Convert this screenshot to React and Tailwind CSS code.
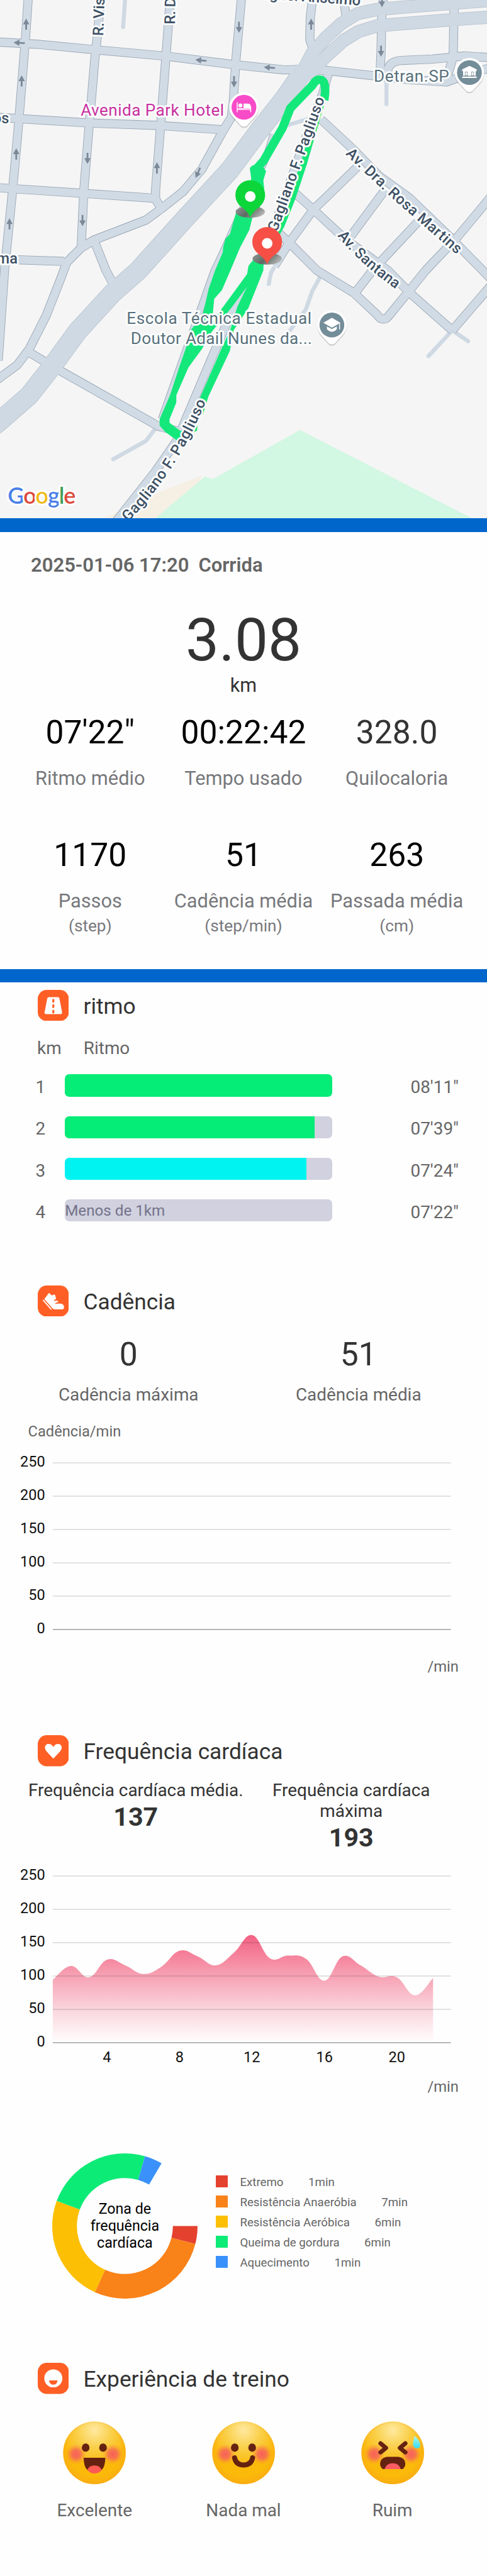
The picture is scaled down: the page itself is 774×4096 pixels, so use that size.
import React from "react";

const FREEWAYS = [
  { d: "M-20 950L0 934L65 877L114 815L172 735L250 650L307 600L413 482L510 377L577 287L634 214L675 155", w: 42 },
  { d: "M670 160L692 118L723 83L757 52L793 30L837 21L893 16L1100 0", w: 27 },
  { d: "M682 172L718 130L762 90L795 70L837 57L998 44L1100 37", w: 27 },
];

const STREETS = [
  "M63 -10L57 77L48 191L39 300L28 421L10 600L-4 800",
  "M224 -10L215 88L210 134L197 287L186 421L180 550",
  "M378 -10L368 126L357 268L345 421L345 442L358 463",
  "M536 -10L523 134L517 230L513 260L492 295L448 375L406 425L358 463L324 488L207 533L179 551L148 582L134 620L103 699L65 774L38 810L-10 845",
  "M694 -10L688 40L687 88L698 120",
  "M755 -20L764 12L768 40",
  "M851 -10L847 20L845 115L843 165",
  "M1007 19L1005 126L992 170",
  "M859 160C862 140 874 135 892 134L960 131L1030 124L1090 128",
  "M1090 150L1050 160L990 182L900 176L730 157L690 154",
  "M-10 93L80 98L207 110L372 125L523 144L630 155L690 154",
  "M-10 260L200 273L345 278L496 288",
  "M-10 416L200 430L345 440",
  "M30 576L142 580",
  "M210 537L235 600L252 632",
  "M712 265L785 333L840 390L909 440L1000 528L1090 620",
  "M792 371L695 465L640 540L609 590",
  "M854 421L778 524",
  "M926 493L826 600L789 648",
  "M1090 435L1016 524L944 600L906 647L862 701C854 711 844 710 836 698L785 650L703 600L640 537L605 505",
  "M645 420L695 465L765 530L860 600L909 650L1003 733",
  "M1090 632L1003 733",
  "M65 782L124 817L352 946L400 958",
  "M730 155L716 207L689 275L606 509L590 560L523 671L468 798L413 928L393 976L344 1047L255 1160",
];

const SIDE_STREETS = [
  "M606 298L590 350L485 580L475 600L358 930",
];

const LANES = [
  "M278 -10L273 60",
  "M857 180L857 231",
  "M640 277L686 263",
  "M607 595L601 605L596 630",
  "M709 616L692 647L678 687L644 732",
  "M1003 733L950 790",
  "M1003 733L1038 757",
  "M348 946L324 978L251 1019",
];

const ARROWS = [
  [58, 54, 0], [48, 180, 0], [36, 342, 0], [21, 497, 0], [348, 373, 0], [690, 54, 0],
  [530, 60, 180], [519, 181, 180], [194, 351, 180], [183, 489, 180], [845, 113, 180], [847, 3, 180],
  [43, 95, -86], [446, 134, -84], [598, 150, -86], [439, 383, 204],
];

function Teardrop({ x, y, fill, children }) {
  return (
    <g transform={`translate(${x} ${y})`}>
      <path d="M0 43C-4 43-7 41-10 37L-24 22A32.500 32.500 0 1 1 24 22L10 37C7 41 4 43 0 43Z" fill="#0000002a" transform="translate(0 3)" />
      <path d="M0 43C-4 43-7 41-10 37L-24 22A32.500 32.500 0 1 1 24 22L10 37C7 41 4 43 0 43Z" fill="#fff" />
      <circle r="27.500" fill={fill} />
      {children}
    </g>
  );
}

function RoutePin({ x, y, fill }) {
  return (
    <g transform={`translate(${x} ${y})`}>
      <ellipse cx="0" cy="33" rx="32.500" ry="13" fill="url(#pinShade)" />
      <path d="M0 45C-5 34-12 28-20 22A33 33 0 1 1 20 22C12 28 5 34 0 45Z" fill={fill} />
      <circle cy="-1" r="11.800" fill="#fff" />
    </g>
  );
}

function RouteMap() {
  const label = {
    fontFamily: "Roboto, sans-serif",
    paintOrder: "stroke",
    stroke: "#fbfdfd",
    strokeWidth: 8,
    strokeLinejoin: "round",
  };
  const road = { ...label, fontWeight: 500, fontSize: 33, fill: "#3e5064" };
  const poi = { ...label, fontWeight: 400, fontSize: 36.5, fill: "#59717b" };
  return (
    <svg viewBox="0 0 1080 1150" className="block h-[824.2px] w-full shrink-0" preserveAspectRatio="none">
      <defs>
        <linearGradient id="pinShade" x1="0" x2="1" y1="0.300" y2="0.700">
          <stop offset="0" stopColor="#8d9390" />
          <stop offset="0.450" stopColor="#5d6a62" />
          <stop offset="1" stopColor="#bdbdbd" />
        </linearGradient>
        <path id="gaglianoTop" d="M614 516L721 217" />
        <path id="gaglianoBottom" d="M284 1158Q394 1046 459 885" />
        <path id="rosa" d="M766 342Q848 424 1016 567" />
        <path id="santana" d="M748 523Q800 588 890 650" />
      </defs>
      <rect width="1080" height="1150" fill="#f5f5f5" />
      <path d="M448 1055L358 1090L230 1150H400Z" fill="#f5efe4" />
      <path d="M665 954L1047 1150H344L455 1057L472 1063Z" fill="#d2f7e2" />

      <g fill="none" strokeLinejoin="round">
        <g stroke="#cfd9e3" strokeLinecap="round" strokeWidth="9">
          {LANES.map((d) => <path key={d} d={d} />)}
        </g>
        <g stroke="#99a6b5">
          {STREETS.map((d) => <path key={d} d={d} strokeWidth="20" />)}
          {SIDE_STREETS.map((d) => <path key={d} d={d} strokeWidth="16" />)}
        </g>
        <g stroke="#b1bdc9">
          {FREEWAYS.map((r) => <path key={r.d} d={r.d} strokeWidth={r.w + 2} />)}
        </g>
        <g stroke="#d1dbe5">
          {STREETS.map((d) => <path key={d} d={d} strokeWidth="17.500" />)}
          {SIDE_STREETS.map((d) => <path key={d} d={d} strokeWidth="13.500" />)}
        </g>
        <g stroke="#cfd9e3">
          {FREEWAYS.map((r) => <path key={r.d} d={r.d} strokeWidth={r.w} />)}
        </g>
      </g>

      {ARROWS.map(([x, y, r]) => (
        <path key={`${x}-${y}`} transform={`translate(${x} ${y}) rotate(${r})`} d="M0-13L7 0H2V12H-2V0H-7Z" fill="#7c8998" />
      ))}

      <g fill="#14e87b">
        <path d="M719 222Q727 172 704 177Q697 181 692 190L644 240L627 283L585 356L572 371L570 406L566 470" fill="none" stroke="#14e87b" strokeWidth="19" strokeLinejoin="round" />
        <path d="M554 373Q561 362 580 366L590 380L584 400L586 420H556L557 395Z" />
        <path d="M714 225L689 310L674 362L648 440L624 500L590 560" fill="none" stroke="#14e87b" strokeWidth="14" strokeLinejoin="round" />
        <path d="M524 470L510 519L500 530L495 548L494 560L477 600L463 640L449 700L424 731L413 770L398 813L377 877L354 930V944L366 958L396 980L437 955L438 945L400 956L376 938V930L391 893V877L418 815L448 770L468 738L475 663L492 644L511 600L532 550L553 510L563 470Z" />
        <path d="M563 575L551 590L548 608L496 679L455 734L440 742L410 815H418L448 774L468 738L513 683L548 636L527 679L511 730L489 778L444 881L445 920L450 920L462 880L510 778L518 733L551 683L584 600L585 575Z" />
      </g>

      <text x="799" y="12" textAnchor="end" transform="rotate(4 799 12)" style={road}>Miguel Anselmo</text>
      <text transform="translate(229 80) rotate(-88)" style={road}>R. Visconde</text>
      <text transform="translate(388 54) rotate(-89)" style={road}>R. Dom</text>
      <text x="20" y="273" textAnchor="end" style={road}>os</text>
      <text x="39" y="585" textAnchor="end" style={road}>ma</text>
      <text style={road}><textPath href="#gaglianoTop" textLength="315">Gagliano F. Pagliuso</textPath></text>
      <text style={road}><textPath href="#gaglianoBottom" textLength="320">Gagliano F. Pagliuso</textPath></text>
      <text style={road}><textPath href="#rosa" textLength="333">Av. Dra. Rosa Martins</textPath></text>
      <text style={road}><textPath href="#santana" textLength="176">Av. Santana</textPath></text>

      <text x="179" y="257" textLength="318" style={{ ...poi, fill: "#c9319f" }}>Avenida Park Hotel</text>
      <text x="829" y="181" textLength="167" style={poi}>Detran.SP</text>
      <text x="281" y="718" textLength="410" style={poi}>Escola Técnica Estadual</text>
      <text x="290" y="763" textLength="402" style={poi}>Doutor Adail Nunes da...</text>

      <Teardrop x={541} y={238} fill="#f84bc8">
        <g fill="#fff">
          <path d="M-16-11H-14V4H14V-2H16V11H14V6H-14V11H-16Z" />
          <circle cx="-8" cy="-4" r="4.500" />
          <path d="M-1-8H9Q15-8 15-2V3H-1Z" />
          <path d="M-13 2H-1V4H-13Z" />
        </g>
      </Teardrop>
      <Teardrop x={1041} y={161} fill="#738d99">
        <g fill="#fff">
          <path d="M0-15L16-7V-3H-16V-7Z" />
          <path d="M-14-4H14V7H10V-2H4V7H-4V-2H-10V7H-14Z" />
          <path d="M-9-1H-5V6H-9ZM5-1H9V6H5ZM-16 9H16V12H-16Z" />
        </g>
      </Teardrop>
      <Teardrop x={736} y={721} fill="#738d99">
        <g fill="#fff">
          <path d="M0-16L19-5L0 6L-19-5Z" />
          <path d="M-11 3L0 9L11 3V9Q6 15 0 15Q-6 15-11 9Z" />
          <path d="M16-5H18V10H16Z" />
        </g>
      </Teardrop>
      <RoutePin x={555} y={437} fill="#0cd63a" />
      <RoutePin x={592.5} y={541} fill="#f74f46" />

      <text x="17" y="1117" textLength="151" style={{ ...label, fontFamily: "Lato, sans-serif", fontSize: 50, fontWeight: 600, stroke: "#ffffff" }}>
        <tspan fill="#4a80e8">G</tspan>
        <tspan fill="#dc4a3d">o</tspan>
        <tspan fill="#efbc1b">o</tspan>
        <tspan fill="#4a80e8">g</tspan>
        <tspan fill="#3d9e57">l</tspan>
        <tspan fill="#dc4a3d">e</tspan>
      </text>
    </svg>
  );
}

function Divider() {
  return <div className="h-[21.5px] shrink-0 bg-[#0066cc]" />;
}

function Stat({ value, muted, label }) {
  return (
    <div className="flex flex-col items-center whitespace-nowrap">
      <span className={`text-[51.6px] leading-[60px] ${muted ? "text-[#333333]" : "text-black"}`}>{value}</span>
      <span className="mt-[25.2px] text-[30.8px] leading-[36px] text-[#77787c]">{label}</span>
    </div>
  );
}

function Summary() {
  return (
    <section className="h-[695.1px] shrink-0 pt-[35.8px]">
      <h1 className="pl-[49px] text-[31px] font-semibold leading-[36px] text-[#666666] whitespace-pre">
        2025-01-06 17:20<span className="ml-[15px]">Corrida</span>
      </h1>
      <div className="mt-[53.2px] text-center text-[94.4px] leading-[94px] text-[#333333]">3.08</div>
      <div className="mt-[6.9px] text-center text-[30.6px] leading-[36px] text-[#333333]">km</div>
      <div className="mt-[27.1px] grid grid-cols-3 px-[21.5px]">
        <Stat value={"07'22\""} label="Ritmo médio" />
        <Stat value="00:22:42" label="Tempo usado" />
        <Stat value="328.0" muted label="Quilocaloria" />
      </div>
      <div className="mt-[74.4px] grid grid-cols-3 px-[21.5px]">
        <Stat value="1170" label="Passos" />
        <Stat value="51" label="Cadência média" />
        <Stat value="263" label="Passada média" />
      </div>
      <div className="mt-[5.2px] grid grid-cols-3 px-[21.5px] text-center text-[26.2px] leading-[30px] text-[#77787c]">
        <span>(step)</span>
        <span>(step/min)</span>
        <span>(cm)</span>
      </div>
    </section>
  );
}

function SectionHeader({ icon, title, className = "" }) {
  return (
    <div className={`flex h-[49.5px] items-center pl-[59.7px] ${className}`}>
      <svg viewBox="0 0 69 69" className="size-[49.5px]">
        <rect width="69" height="69" rx="20" fill="#ff5f25" />
        {icon}
      </svg>
      <h2 className="ml-[23.3px] pt-[2.5px] text-[35.3px] leading-[40px] text-[#333333] whitespace-nowrap">{title}</h2>
    </div>
  );
}

const RoadIcon = (
  <>
    <path d="M24 16H45Q47 16 48 19L54 50Q54 53.500 51 53.500H18Q15 53.500 15 50L21 19Q22 16 24 16Z" fill="#fff" />
    <path d="M34.500 22V26M34.500 34V38M34.500 46V50" stroke="#ff5f25" strokeWidth="4.500" strokeLinecap="round" />
  </>
);

const ShoeIcon = (
  <>
    <path d="M25 16.500L31 22L37 20Q39 21 39.500 25L40.500 30L36 32.500V34.500L43 33L46 37L39 38.500V40.500L48 40Q57 40 58 46V51L55 53H37Q34 53 32 50L14.500 30Z" fill="#fff" />
    <path d="M12.500 33L29.500 52.500" stroke="#fff" strokeWidth="2.500" strokeLinecap="round" />
  </>
);

const HeartIcon = (
  <path d="M34.500 52L20 36.500Q15 31 16 25.500Q18 19.500 24 19.500Q31 19.500 34.500 26.500Q38 19.500 45 19.500Q51 19.500 53 25.500Q54 31 49 36.500Z" fill="#fff" />
);

const FaceIcon = (
  <>
    <circle cx="34.500" cy="34.500" r="20" fill="#fff" />
    <path d="M25 39H44Q42.500 48.500 34.500 48.500Q26.500 48.500 25 39Z" fill="#ff5f25" />
  </>
);

const LAPS = [
  { km: 1, time: "08'11\"", width: "100%", color: "bg-[#05ec77]" },
  { km: 2, time: "07'39\"", width: "93.5%", color: "bg-[#05ec77]" },
  { km: 3, time: "07'24\"", width: "90.4%", color: "bg-[#00f3f0]" },
  { km: 4, time: "07'22\"", width: "0%", color: "bg-transparent", note: "Menos de 1km" },
];

function Pace() {
  return (
    <section className="text-[27.9px] text-[#666666]">
      <SectionHeader icon={RoadIcon} title="ritmo" className="mt-[11.5px]" />
      <div className="mt-[28.1px] flex pl-[59px] leading-[32px]">
        <span className="w-[73.8px]">km</span>
        <span>Ritmo</span>
      </div>
      <div className="mt-[25px] flex flex-col gap-[31.1px]">
        {LAPS.map((lap) => (
          <div key={lap.km} className="flex h-[35.2px] items-center pl-[56.6px] pr-[45px]">
            <span className="w-[46.6px] pt-[6.4px] leading-[32px]">{lap.km}</span>
            <div className="flex h-full w-[424.5px] items-center overflow-hidden rounded-[7px] bg-[#d1d1df]">
              {lap.note ? (
                <span className="pt-[1px] text-[24.2px] leading-[30px] text-[#73738a] whitespace-nowrap">{lap.note}</span>
              ) : (
                <div className={`h-full ${lap.color}`} style={{ width: lap.width }} />
              )}
            </div>
            <span className="ml-auto pt-[6.4px] leading-[32px]">{lap.time}</span>
          </div>
        ))}
      </div>
    </section>
  );
}

const HEART_RATE = [94.2, 115, 98, 124.5, 116, 103, 114, 138, 129.5, 116, 135, 161.5, 126.5, 130.7, 125.5, 93, 129.5, 116, 99, 98, 71, 97];

function smoothArea(values, left, step, base, unit) {
  const pts = values.map((v, i) => [left + i * step, base - v * unit]);
  const at = (i) => pts[Math.max(0, Math.min(pts.length - 1, i))];
  let d = `M${pts[0][0]} ${base}L${pts[0][0]} ${pts[0][1]}`;
  for (let i = 1; i < pts.length; i++) {
    const [p0, p1, p2, p3] = [at(i - 2), at(i - 1), at(i), at(i + 1)];
    d += `C${p1[0] + (p2[0] - p0[0]) * 0.2} ${p1[1] + (p2[1] - p0[1]) * 0.2} ${p2[0] - (p3[0] - p1[0]) * 0.2} ${p2[1] - (p3[1] - p1[1]) * 0.2} ${p2[0]} ${p2[1]}`;
  }
  return `${d}L${at(pts.length)[0]} ${base}Z`;
}

function Chart({ values, ticks = [], height }) {
  return (
    <svg viewBox={`0 0 774 ${height}`} width="774" height={height} className="block" fontFamily="Roboto, sans-serif" fontSize="23.500" fill="#111111">
      <defs>
        <linearGradient id="pulse" gradientUnits="userSpaceOnUse" x1="0" x2="0" y1="130" y2="301">
          <stop offset="0" stopColor="#f26283" />
          <stop offset="0.380" stopColor="#f7a2b4" />
          <stop offset="0.690" stopColor="#fad5dd" />
          <stop offset="0.970" stopColor="#fffafb" />
          <stop offset="1" stopColor="#ffffff" />
        </linearGradient>
      </defs>
      {values && <path d={smoothArea(values, 83.9, 28.78, 301, 1.06)} fill="url(#pulse)" />}
      {[250, 200, 150, 100, 50, 0].map((v, i) => (
        <g key={v}>
          <path d={`M83.900 ${36 + i * 53}H716.700`} stroke={v ? "#000000" : "#8f8f8f"} strokeOpacity={v ? 0.22 : 0.85} strokeWidth={v ? 1 : 1.7} />
          <text x="71.700" y={42.3 + i * 53} textAnchor="end">{v}</text>
        </g>
      ))}
      {ticks.map(([t, x]) => (
        <text key={t} x={x} y="332.300" textAnchor="middle">{t}</text>
      ))}
    </svg>
  );
}

function Cadence() {
  return (
    <section className="text-[#666666]">
      <SectionHeader icon={ShoeIcon} title="Cadência" className="mt-[101.4px]" />
      <div className="mt-[30.5px] grid grid-cols-2 px-[21.5px] text-center">
        {[["0", "Cadência máxima"], ["51", "Cadência média"]].map(([value, label]) => (
          <div key={label} className="flex flex-col">
            <span className="text-[51.6px] leading-[60px] text-[#333333]">{value}</span>
            <span className="mt-[18.2px] text-[27.9px] leading-[32px]">{label}</span>
          </div>
        ))}
      </div>
      <div className="mt-[27.6px] pl-[44.5px] text-[23.7px] leading-[28px]">Cadência/min</div>
      <Chart height={320} />
      <div className="mt-[26px] pr-[45px] text-right text-[23.8px] leading-[28px]">/min</div>
    </section>
  );
}

function HeartRate() {
  return (
    <section className="text-[#333333]">
      <SectionHeader icon={HeartIcon} title="Frequência cardíaca" className="mt-[95.5px]" />
      <div className="mt-[22.8px] grid h-[115.500px] grid-cols-2 items-start px-[44.5px] text-center text-[27.9px] leading-[32.700px]">
        <div>
          <p className="whitespace-nowrap">Frequência cardíaca média.</p>
          <p className="mt-[2px] text-[41.200px] font-bold leading-[46px]">137</p>
        </div>
        <div>
          <p>Frequência cardíaca<br />máxima</p>
          <p className="mt-[2px] text-[41.200px] font-bold leading-[46px]">193</p>
        </div>
      </div>
      <Chart height={345} values={HEART_RATE} ticks={[[4, 169.8], [8, 285.3], [12, 400.3], [16, 515.8], [20, 630.8]]} />
      <div className="mt-[12px] pr-[45px] text-right text-[23.8px] leading-[28px] text-[#666666]">/min</div>
    </section>
  );
}

const ZONES = [
  { name: "Extremo", minutes: 1, color: "#e5412f" },
  { name: "Resistência Anaeróbia", minutes: 7, color: "#f98219" },
  { name: "Resistência Aeróbica", minutes: 6, color: "#fdbf03" },
  { name: "Queima de gordura", minutes: 6, color: "#0deb77" },
  { name: "Aquecimento", minutes: 1, color: "#3b91fb" },
];

function ringSlice(from, to, outer, inner) {
  const p = (r, a) => `${115.5 + r * Math.cos((a * Math.PI) / 180)} ${115.5 + r * Math.sin((a * Math.PI) / 180)}`;
  return `M${p(outer, from)}A${outer} ${outer} 0 0 1 ${p(outer, to)}L${p(inner, to)}A${inner} ${inner} 0 0 0 ${p(inner, from)}Z`;
}

function Zones() {
  let start = 0;
  const slices = ZONES.map((z) => {
    const from = start;
    start += z.minutes * 14.3;
    return { ...z, d: ringSlice(from, start, 115.5, 76.3) };
  });
  return (
    <section className="mt-[92.1px] flex h-[231px] pl-[82.900px]">
      <div className="grid w-[231px] shrink-0 place-items-center">
        <svg viewBox="0 0 231 231" className="col-start-1 row-start-1 size-[231px]">
          {slices.map((s) => <path key={s.name} d={s.d} fill={s.color} />)}
        </svg>
        <p className="col-start-1 row-start-1 text-center text-[23.200px] leading-[27.200px] text-black">
          Zona de<br />frequência<br />cardíaca
        </p>
      </div>
      <ul className="ml-[29.100px] flex flex-col gap-[13.100px] pt-[35px]">
        {ZONES.map((z) => (
          <li key={z.name} className="flex h-[18.900px] items-center text-[18.700px] text-[#666666] whitespace-nowrap">
            <span className="size-[18.900px]" style={{ backgroundColor: z.color }} />
            <span className="ml-[19.500px] pt-[3px] leading-[22px]">{z.name}</span>
            <span className="ml-[39.500px] pt-[3px] leading-[22px]">{z.minutes}min</span>
          </li>
        ))}
      </ul>
    </section>
  );
}

function Emoji({ children }) {
  return (
    <svg viewBox="0 0 140 140" className="size-[100.300px]">
      <defs>
        <radialGradient id="skin" cx="0.500" cy="0.140" r="0.550">
          <stop offset="0" stopColor="#ffe9a0" />
          <stop offset="0.500" stopColor="#fad04a" />
          <stop offset="1" stopColor="#fbb90a" />
        </radialGradient>
        <radialGradient id="rim" cx="0.500" cy="0.460" r="0.540">
          <stop offset="0.780" stopColor="#f9a31a" stopOpacity="0" />
          <stop offset="1" stopColor="#f9a31a" stopOpacity="0.550" />
        </radialGradient>
        <radialGradient id="blush">
          <stop offset="0" stopColor="#f7605a" />
          <stop offset="0.450" stopColor="#f76a55" stopOpacity="0.850" />
          <stop offset="1" stopColor="#f99a30" stopOpacity="0" />
        </radialGradient>
        <linearGradient id="drop" x1="0" x2="0" y1="0" y2="1">
          <stop offset="0" stopColor="#b5f7e0" />
          <stop offset="1" stopColor="#35dcf5" />
        </linearGradient>
      </defs>
      <circle cx="70" cy="70" r="69.500" fill="url(#skin)" />
      <circle cx="70" cy="70" r="69.500" fill="url(#rim)" />
      <circle cx="29" cy="73" r="23" fill="url(#blush)" />
      <circle cx="111" cy="73" r="23" fill="url(#blush)" />
      {children}
    </svg>
  );
}

const RoundEyes = (
  <g fill="#662211">
    <ellipse cx="50.500" cy="58.500" rx="8.500" ry="9.300" />
    <ellipse cx="89" cy="58.500" rx="8.500" ry="9.300" />
  </g>
);

const MOODS = [
  {
    label: "Excelente",
    face: (
      <>
        {RoundEyes}
        <path d="M46 81H94Q94 100 86 108H54Q46 100 46 81Z" fill="#662211" />
        <path d="M54 108Q58 98 70 98Q82 98 86 108Q80 116 70 116Q60 116 54 108Z" fill="#fd5b54" />
      </>
    ),
  },
  {
    label: "Nada mal",
    face: (
      <>
        {RoundEyes}
        <path d="M50 81Q53 97 70 97Q87 97 90 81" fill="none" stroke="#662211" strokeWidth="11" strokeLinecap="round" />
      </>
    ),
  },
  {
    label: "Ruim",
    face: (
      <>
        <path d="M43 49L55 59L43 69M98 49L86 59L98 69" fill="none" stroke="#662211" strokeWidth="9.500" strokeLinecap="round" strokeLinejoin="round" />
        <path d="M57 79H83Q97 81 98 94Q98 102 92 106H48Q42 102 42 94Q43 81 57 79Z" fill="#662211" />
        <path d="M52 106Q56 93 70 93Q84 93 88 106Z" fill="#fd5b63" />
        <path d="M118 32Q133 44 131 55Q129 60 123 60Q116 59 115 52Q115 44 118 32Z" fill="url(#drop)" />
      </>
    ),
  },
];

function Experience() {
  return (
    <section>
      <SectionHeader icon={FaceIcon} title="Experiência de treino" className="mt-[102.400px]" />
      <div className="mt-[43.400px] grid grid-cols-3 px-[32px]">
        {MOODS.map((m) => (
          <div key={m.label} className="flex flex-col items-center text-[27.900px] leading-[32px] text-[#666666]">
            <Emoji>{m.face}</Emoji>
            <span className="mt-[25px] whitespace-nowrap">{m.label}</span>
          </div>
        ))}
      </div>
    </section>
  );
}

export default function App() {
  return (
    <main className="flex h-[4096px] w-[774px] flex-col overflow-hidden bg-[#fefefe] font-[Roboto,sans-serif] *:shrink-0">
      <RouteMap />
      <Divider />
      <Summary />
      <Divider />
      <Pace />
      <Cadence />
      <HeartRate />
      <Zones />
      <Experience />
    </main>
  );
}
